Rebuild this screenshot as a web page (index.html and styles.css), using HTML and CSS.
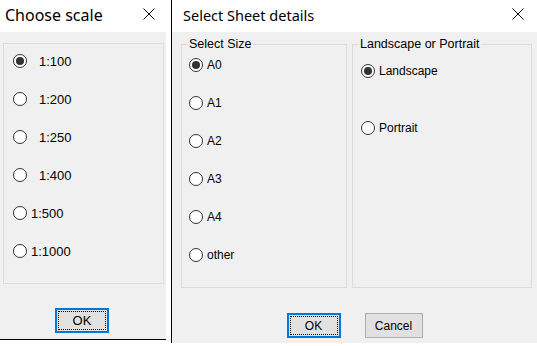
FILE: index.html
```html
<!DOCTYPE html>
<html>
 <head>
     <title>Dialogs</title>
     <link rel="stylesheet" href="styles.css">
     <meta charset="UTF-8">
 </head>
 <body>
    <div class="screen">
      <div class="window win_scale">
        <div class="titlebar">
          <span class="title">Choose scale</span>
          <svg class="close" width="12" height="12" viewBox="0 0 12 12"><path d="M0.5 0.5 L11.5 11.5 M11.5 0.5 L0.5 11.5" stroke="#000" stroke-width="1" fill="none"/></svg>
        </div>
        <div class="client">
          <div class="scale_box">
            <label class="option"><span class="radio checked"></span><span class="txt wide">1:100</span></label>
            <label class="option"><span class="radio"></span><span class="txt wide">1:200</span></label>
            <label class="option"><span class="radio"></span><span class="txt wide">1:250</span></label>
            <label class="option"><span class="radio"></span><span class="txt wide">1:400</span></label>
            <label class="option"><span class="radio"></span><span class="txt">1:500</span></label>
            <label class="option"><span class="radio"></span><span class="txt">1:1000</span></label>
          </div>
          <div class="buttons scale_buttons">
            <button class="btn btn_default">OK</button>
          </div>
        </div>
      </div>

      <div class="window win_sheet">
        <div class="titlebar">
          <span class="title">Select Sheet details</span>
          <svg class="close" width="12" height="12" viewBox="0 0 12 12"><path d="M0.5 0.5 L11.5 11.5 M11.5 0.5 L0.5 11.5" stroke="#000" stroke-width="1" fill="none"/></svg>
        </div>
        <div class="client">
          <div class="groups">
            <fieldset class="group size_group">
              <legend>Select Size</legend>
              <div class="options size_opts">
                <label class="option"><span class="radio checked"></span><span class="txt">A0</span></label>
                <label class="option"><span class="radio"></span><span class="txt">A1</span></label>
                <label class="option"><span class="radio"></span><span class="txt">A2</span></label>
                <label class="option"><span class="radio"></span><span class="txt">A3</span></label>
                <label class="option"><span class="radio"></span><span class="txt">A4</span></label>
                <label class="option"><span class="radio"></span><span class="txt">other</span></label>
              </div>
            </fieldset>
            <fieldset class="group orient_group">
              <legend>Landscape or Portrait</legend>
              <div class="options orient_opts">
                <label class="option"><span class="radio checked"></span><span class="txt">Landscape</span></label>
                <label class="option"><span class="radio"></span><span class="txt">Portrait</span></label>
              </div>
            </fieldset>
          </div>
          <div class="buttons sheet_buttons">
            <button class="btn btn_default">OK</button>
            <button class="btn btn_cancel">Cancel</button>
          </div>
        </div>
      </div>
    </div>
 </body>
</html>
```

FILE: styles.css
```css
body {
    margin: 0;
    background: #fff;
    font-family: "Liberation Sans", Arial, sans-serif;
    font-size: 12px;
    color: #000;
}
.screen {display: flex; gap: 5px; height: 346px; align-items: flex-start;}

/* windows */
.window {display: flex; flex-direction: column; box-sizing: border-box;}
.win_scale {width: 166px; height: 340px; border-bottom: 1px solid #000; font-size: 13px;}
.win_sheet {width: 366px; height: 343px; border-left: 1px solid #000;}
.titlebar {
    height: 32px; flex: none;
    background: #fff;
    display: flex; align-items: center; justify-content: space-between;
}
.title {font-family: "Noto Sans", sans-serif; font-size: 15px; line-height: 20px; margin-top: -3px;}
.win_scale .title {font-size: 16px;}
.win_sheet .title {font-size: 14.5px;}
.win_scale .titlebar {padding: 0 11px 0 5px;}
.win_sheet .titlebar {padding: 0 13px 0 11px;}
.close {display: block; margin-top: -4px;}
.client {flex: 1; background: #f0f0f0;}

/* radio buttons */
.option {display: flex; align-items: center; height: 16px;}
.radio {
    position: relative;
    width: 14px; height: 14px; flex: none;
    box-sizing: border-box;
    border: 1px solid #333;
    border-radius: 50%;
    background: #fff;
}
.radio.checked::after {
    content: "";
    position: absolute; left: 2px; top: 2px;
    width: 8px; height: 8px;
    border-radius: 50%;
    background: #333;
}
.txt {margin-left: 4px;}
.txt.wide {margin-left: 12px;}

/* left dialog */
.scale_box {
    margin: 11px 0 0 3px;
    width: 161px; height: 241px;
    box-sizing: border-box;
    border: 1px solid #dcdcdc;
    padding: 9px 0 0 9px;
    display: flex; flex-direction: column; gap: 22px;
}

/* right dialog */
.groups {display: flex; gap: 5px; margin: 5px 0 0 9px;}
.group {
    margin: 0; padding: 0;
    height: 251px; box-sizing: border-box;
    border: 1px solid #dcdcdc;
    min-width: 0;
}
.size_group {width: 166px;}
.orient_group {width: 180px;}
legend {padding: 0 1px; margin-left: 6px; line-height: 14px; font-size: 12.5px;}
.options {display: flex; flex-direction: column;}
.size_opts {padding: 6px 0 0 7px; gap: 22px;}
.orient_opts {padding: 12px 0 0 8px; gap: 41px;}

/* buttons */
.buttons {display: flex; justify-content: center;}
.scale_buttons {margin-top: 24px; justify-content: flex-start; padding-left: 55px;}
.sheet_buttons {margin-top: 25px; gap: 24px;}
.btn {
    height: 25px; padding: 0;
    font-family: "Liberation Sans", Arial, sans-serif; font-size: 12px; color: #000;
    background: #e1e1e1;
    box-sizing: border-box;
}
.scale_buttons .btn {font-size: 13px;}
.btn_default {
    width: 54px;
    border: 2px solid #0078d7;
    outline: 1px dotted #000; outline-offset: -4px;
}
.btn_cancel {width: 58px; border: 1px solid #adadad;}
```
